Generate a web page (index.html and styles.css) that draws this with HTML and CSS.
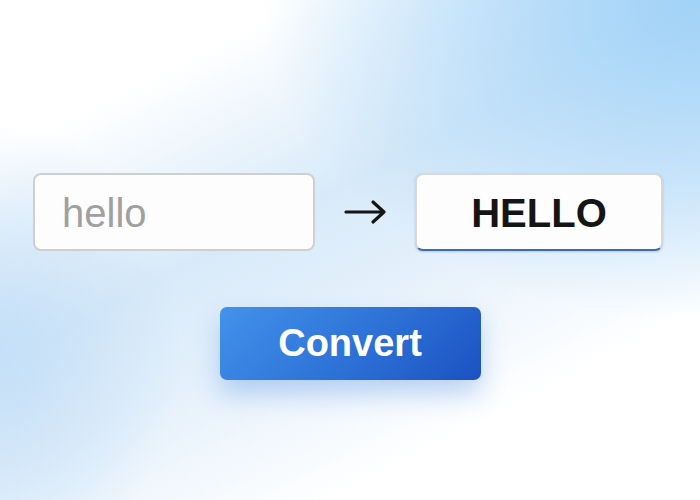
FILE: index.html
```html
<!DOCTYPE html>
<html lang="en">
<head>
    <meta charset="UTF-8">
    <meta name="viewport" content="width=device-width, initial-scale=1.0">
    <title>Convert</title>
    <link rel="stylesheet" href="styles.css">
</head>
<body>
    <div class="page">
        <div class="row">
            <div class="field field-input">hello</div>
            <svg class="arrow" width="44" height="26" viewBox="0 0 44 26" xmlns="http://www.w3.org/2000/svg">
                <path d="M2,13 L40,13 M29,3 L40,13 L29,23" fill="none" stroke="#151515" stroke-width="3.2" stroke-linecap="round" stroke-linejoin="round" />
            </svg>
            <div class="field field-output">HELLO</div>
        </div>
        <button class="convert">Convert</button>
    </div>
</body>
</html>
```

FILE: styles.css
```css
html, body {
    margin: 0;
    height: 100%;
}
body {
    font-family: 'Liberation Sans', Arial, sans-serif;
    background-color: #ffffff;
    background-image:
        radial-gradient(ellipse 440px 320px at 100% 0%, rgba(160, 210, 247, 1) 0%, rgba(172, 215, 248, 0.75) 40%, rgba(255, 255, 255, 0) 100%),
        radial-gradient(ellipse 180px 230px at 0% 70%, rgba(192, 221, 247, 0.85) 0%, rgba(255, 255, 255, 0) 100%),
        linear-gradient(153deg, #ffffff 18%, #d8eaf9 42%, #e4f0fb 56%, #ffffff 78%);
    overflow: hidden;
}
.page {
    display: flex;
    flex-direction: column;
    align-items: center;
    padding-top: 173px;
}
.row {
    display: flex;
    align-items: center;
    margin-right: 4px;
}
.field {
    box-sizing: border-box;
    height: 78px;
    border-radius: 8px;
    background: #fdfdfd;
    font-size: 40px;
    display: flex;
    align-items: center;
}
.field-input {
    width: 282px;
    border: 2px solid #cfcfcf;
    padding: 2px 0 0 27px;
    color: #a0a0a0;
}
.arrow {
    margin: 0 27px 0 29px;
}
.field-output {
    width: 248px;
    border: 2px solid #d6d8dc;
    border-bottom-color: #3f6ea6;
    justify-content: center;
    padding-top: 2px;
    font-weight: bold;
    color: #151515;
    box-shadow: 0 1px 2px rgba(40, 80, 140, 0.25);
}
.convert {
    margin-top: 56px;
    width: 261px;
    height: 73px;
    border: none;
    border-radius: 7px;
    background: linear-gradient(135deg, #4292ea 0%, #2f74d8 50%, #1b52c2 100%);
    color: #ffffff;
    font-family: 'Liberation Sans', Arial, sans-serif;
    font-size: 38px;
    font-weight: bold;
    box-shadow: 0 14px 26px rgba(50, 120, 220, 0.3);
    cursor: pointer;
}
```
